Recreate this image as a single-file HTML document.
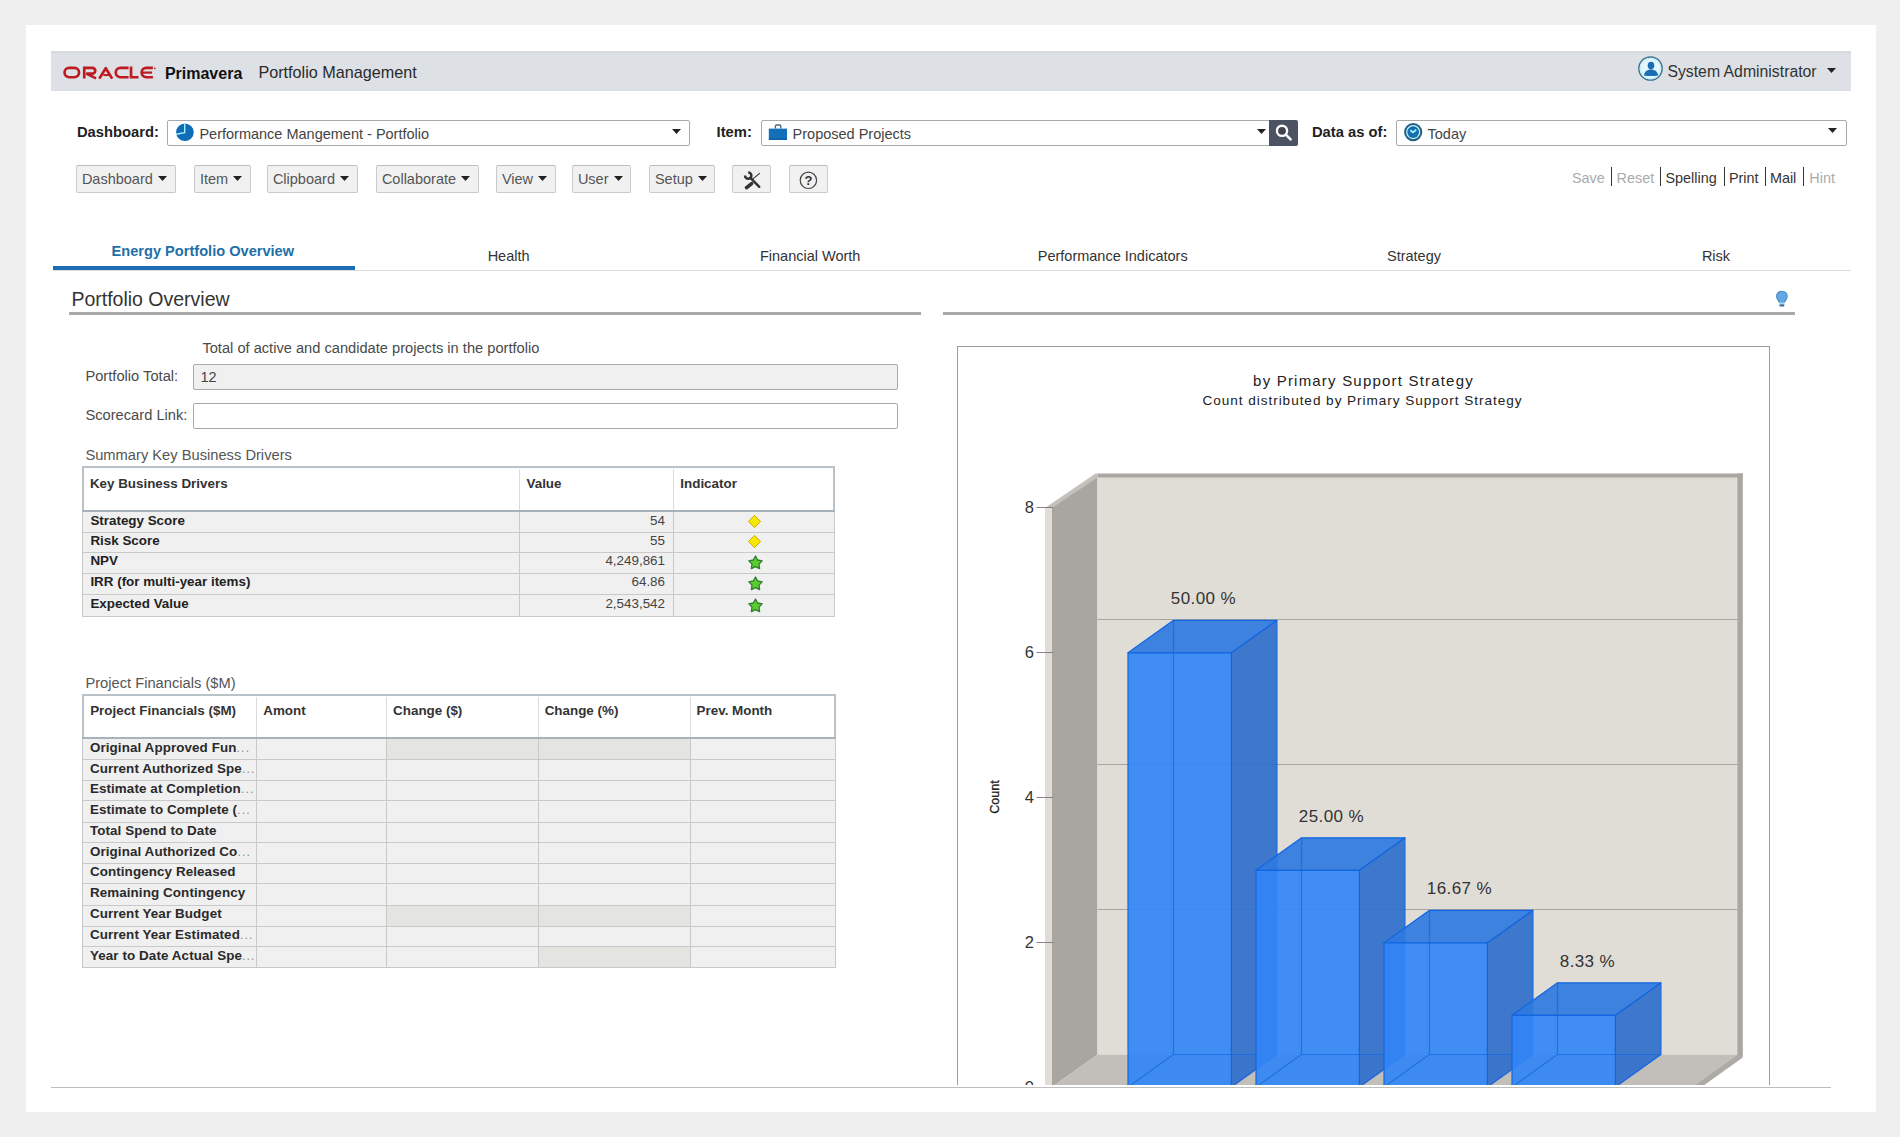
<!DOCTYPE html><html><head><meta charset="utf-8"><style>
html,body{margin:0;padding:0}
body{width:1900px;height:1137px;background:#efefef;position:relative;overflow:hidden;font-family:"Liberation Sans", sans-serif}
.t{position:absolute;line-height:1;white-space:nowrap}
.b{position:absolute;display:block}
</style></head><body>
<div class="b" style="left:26px;top:25px;width:1850px;height:1087px;background:#fff"></div>
<div class="b" style="left:51px;top:51px;width:1800px;height:40px;background:#dde1e5"></div>
<div class="b" style="left:51px;top:51px;width:1800px;height:2px;background:#d6dade"></div>
<div class="b" style="left:51px;top:90px;width:1800px;height:1px;background:#d9dde1"></div>
<svg class="b" style="left:63px;top:66px" width="94" height="14" viewBox="0 0 94 14">
<g fill="none" stroke="#bd1a22" stroke-width="2.7">
<rect x="1.55" y="1.95" width="14.5" height="9.3" rx="4.65"/>
<path d="M21.25 12.6V1.95H29.4A2.85 2.85 0 0 1 29.4 7.65H23.4L33 12.4"/>
<path d="M36.3 12.6L42.75 2.2L49.2 12.6" stroke-linejoin="round"/>
<path d="M40.4 9.05H46.5" stroke-width="2"/>
<path d="M65.6 1.95H57.4A4.65 4.65 0 0 0 57.4 11.25H65.6"/>
<path d="M68.05 0.6V11.25H75.5"/>
<path d="M89.9 1.95H83.3A4.65 4.65 0 0 0 83.3 11.25H89.9"/>
<path d="M79.8 6.6H89.1" stroke-width="2.2"/>
</g><circle cx="91.8" cy="2.3" r="0.9" fill="#bd1a22"/></svg>
<div class="t" style="left:164.9px;top:65.66px;font-size:16px;color:#111;font-weight:bold;">Primavera</div>
<div class="t" style="left:258.4px;top:64.49px;font-size:16.2px;color:#2a2a2a;">Portfolio Management</div>
<svg class="b" style="left:1637px;top:55px" width="28" height="28" viewBox="0 0 28 28">
<circle cx="13.5" cy="13.5" r="11.6" fill="#e4f6fc" stroke="#3d6f8c" stroke-width="1.5"/>
<circle cx="13.5" cy="13.5" r="10.2" fill="none" stroke="#c4eefa" stroke-width="1.2"/>
<ellipse cx="14" cy="10.6" rx="3.3" ry="3.8" fill="#1a6db5"/>
<path d="M7 20.6C7.4 16.6 10 14.4 14 14.4S20.6 16.6 21.2 20.6Q14 21.6 7 20.6Z" fill="#1a6db5"/>
</svg>
<div class="t" style="left:1667.4px;top:63.83px;font-size:15.8px;color:#333;">System Administrator</div>
<svg class="b" style="left:1827px;top:68px" width="9" height="5"><path d="M0 0H9L4.5 5Z" fill="#222"/></svg>
<div class="t" style="left:76.9px;top:124.71px;font-size:14.75px;color:#222;font-weight:bold;">Dashboard:</div>
<div class="b" style="left:167px;top:120px;width:523px;height:26px;background:#fff;border:1px solid #a9a9a9;border-radius:2px;box-sizing:border-box"></div>
<svg class="b" style="left:175px;top:122px" width="20" height="20" viewBox="0 0 20 20">
<circle cx="9.9" cy="10.2" r="8.8" fill="#0f6db8"/>
<path d="M9.7 1.2V10.6L1 12.2" stroke="#a8ecff" stroke-width="1.4" fill="none"/>
</svg>
<div class="t" style="left:199.4px;top:127.23px;font-size:14.5px;color:#444;">Performance Mangement - Portfolio</div>
<svg class="b" style="left:672px;top:129px" width="9" height="5"><path d="M0 0H9L4.5 5Z" fill="#222"/></svg>
<div class="t" style="left:716.6px;top:124.71px;font-size:14.75px;color:#222;font-weight:bold;">Item:</div>
<div class="b" style="left:761px;top:120px;width:509px;height:26px;background:#fff;border:1px solid #a9a9a9;border-radius:2px 0 0 2px;box-sizing:border-box"></div>
<svg class="b" style="left:768px;top:122px" width="20" height="19" viewBox="0 0 20 19">
<rect x="0.8" y="6.6" width="18.2" height="11.3" fill="#1270b8"/>
<rect x="0.8" y="16.6" width="18.2" height="1.3" fill="#0b5e9e"/>
<path d="M7.4 6.6V4.2Q7.4 3 8.6 3H11.6Q12.8 3 12.8 4.2V6.6" fill="none" stroke="#4a6a80" stroke-width="1.4"/>
</svg>
<div class="t" style="left:792.6px;top:127.23px;font-size:14.5px;color:#444;">Proposed Projects</div>
<svg class="b" style="left:1257px;top:129px" width="9" height="5"><path d="M0 0H9L4.5 5Z" fill="#222"/></svg>
<div class="b" style="left:1269px;top:120px;width:29px;height:26px;background:#4b5262;border-radius:0 2px 2px 0"></div>
<svg class="b" style="left:1269px;top:120px" width="29" height="26" viewBox="0 0 29 26">
<circle cx="13" cy="10.8" r="5.1" fill="#3f434b" stroke="#fff" stroke-width="2.4"/>
<path d="M16.8 14.6L21.6 19.4" stroke="#fff" stroke-width="2.6" stroke-linecap="round"/>
</svg>
<div class="t" style="left:1311.9px;top:124.71px;font-size:14.75px;color:#222;font-weight:bold;">Data as of:</div>
<div class="b" style="left:1396px;top:120px;width:451px;height:26px;background:#fff;border:1px solid #a9a9a9;border-radius:2px;box-sizing:border-box"></div>
<svg class="b" style="left:1403px;top:122px" width="20" height="20" viewBox="0 0 20 20">
<circle cx="10.2" cy="10.1" r="8.1" fill="#c8f4fd" stroke="#1f5f82" stroke-width="2"/>
<circle cx="10.2" cy="10.1" r="5.9" fill="#126fb0"/>
<path d="M7.3 8.2L10 10.4L13.2 7.8" fill="none" stroke="#a8f0ff" stroke-width="1.9"/>
</svg>
<div class="t" style="left:1427.5px;top:127.23px;font-size:14.5px;color:#444;">Today</div>
<svg class="b" style="left:1828px;top:128px" width="9" height="5"><path d="M0 0H9L4.5 5Z" fill="#222"/></svg>
<div class="b" style="left:76px;top:165px;width:100px;height:28px;background:#f1f1f1;border:1px solid #c9c9c9;border-top-color:#bdbdbd;border-radius:2px;box-sizing:border-box"></div>
<div class="t" style="left:81.9px;top:171.53px;font-size:14.5px;color:#555;">Dashboard</div>
<svg class="b" style="left:157.8px;top:176px" width="9" height="5"><path d="M0 0H9L4.5 5Z" fill="#222"/></svg>
<div class="b" style="left:194px;top:165px;width:57px;height:28px;background:#f1f1f1;border:1px solid #c9c9c9;border-top-color:#bdbdbd;border-radius:2px;box-sizing:border-box"></div>
<div class="t" style="left:199.9px;top:171.53px;font-size:14.5px;color:#555;">Item</div>
<svg class="b" style="left:233.1px;top:176px" width="9" height="5"><path d="M0 0H9L4.5 5Z" fill="#222"/></svg>
<div class="b" style="left:267px;top:165px;width:91px;height:28px;background:#f1f1f1;border:1px solid #c9c9c9;border-top-color:#bdbdbd;border-radius:2px;box-sizing:border-box"></div>
<div class="t" style="left:272.9px;top:171.53px;font-size:14.5px;color:#555;">Clipboard</div>
<svg class="b" style="left:339.9px;top:176px" width="9" height="5"><path d="M0 0H9L4.5 5Z" fill="#222"/></svg>
<div class="b" style="left:376px;top:165px;width:103px;height:28px;background:#f1f1f1;border:1px solid #c9c9c9;border-top-color:#bdbdbd;border-radius:2px;box-sizing:border-box"></div>
<div class="t" style="left:381.9px;top:171.53px;font-size:14.5px;color:#555;">Collaborate</div>
<svg class="b" style="left:461.0px;top:176px" width="9" height="5"><path d="M0 0H9L4.5 5Z" fill="#222"/></svg>
<div class="b" style="left:496px;top:165px;width:60px;height:28px;background:#f1f1f1;border:1px solid #c9c9c9;border-top-color:#bdbdbd;border-radius:2px;box-sizing:border-box"></div>
<div class="t" style="left:501.9px;top:171.53px;font-size:14.5px;color:#555;">View</div>
<svg class="b" style="left:538.1px;top:176px" width="9" height="5"><path d="M0 0H9L4.5 5Z" fill="#222"/></svg>
<div class="b" style="left:572px;top:165px;width:59px;height:28px;background:#f1f1f1;border:1px solid #c9c9c9;border-top-color:#bdbdbd;border-radius:2px;box-sizing:border-box"></div>
<div class="t" style="left:577.9px;top:171.53px;font-size:14.5px;color:#555;">User</div>
<svg class="b" style="left:613.5px;top:176px" width="9" height="5"><path d="M0 0H9L4.5 5Z" fill="#222"/></svg>
<div class="b" style="left:649px;top:165px;width:66px;height:28px;background:#f1f1f1;border:1px solid #c9c9c9;border-top-color:#bdbdbd;border-radius:2px;box-sizing:border-box"></div>
<div class="t" style="left:654.9px;top:171.53px;font-size:14.5px;color:#555;">Setup</div>
<svg class="b" style="left:697.8px;top:176px" width="9" height="5"><path d="M0 0H9L4.5 5Z" fill="#222"/></svg>
<div class="b" style="left:732px;top:165px;width:39px;height:28px;background:#f1f1f1;border:1px solid #c9c9c9;border-top-color:#bdbdbd;border-radius:2px;box-sizing:border-box"></div>
<svg class="b" style="left:732px;top:165px" width="39" height="28" viewBox="0 0 39 28">
<path d="M16.2 7.4A3.2 3.2 0 1 1 13 10.6" fill="none" stroke="#333" stroke-width="2.5"/>
<path d="M18.4 12.8L27.3 21.8" stroke="#333" stroke-width="2.4" stroke-linecap="round"/>
<path d="M27.8 8.2L20.5 14.4" stroke="#333" stroke-width="1.1"/>
<path d="M19.6 18.6L14.6 22.6" stroke="#333" stroke-width="3.6" stroke-linecap="round"/>
</svg>
<div class="b" style="left:789px;top:165px;width:39px;height:28px;background:#f1f1f1;border:1px solid #c9c9c9;border-top-color:#bdbdbd;border-radius:2px;box-sizing:border-box"></div>
<svg class="b" style="left:798px;top:170px" width="21" height="21" viewBox="0 0 21 21">
<circle cx="10.4" cy="10.3" r="8.2" fill="none" stroke="#444" stroke-width="1.2"/>
<text x="10.4" y="15" text-anchor="middle" font-family="Liberation Sans" font-weight="bold" font-size="13" fill="#333">?</text>
</svg>
<div class="t" style="left:1571.9px;top:170.81px;font-size:14.4px;color:#aaa;">Save</div>
<div class="t" style="left:1616.6px;top:170.81px;font-size:14.4px;color:#aaa;">Reset</div>
<div class="t" style="left:1665.5px;top:170.81px;font-size:14.4px;color:#333;">Spelling</div>
<div class="t" style="left:1728.9px;top:170.81px;font-size:14.4px;color:#333;">Print</div>
<div class="t" style="left:1769.9px;top:170.81px;font-size:14.4px;color:#333;">Mail</div>
<div class="t" style="left:1809.3px;top:170.81px;font-size:14.4px;color:#aaa;">Hint</div>
<div class="b" style="left:1611.1px;top:167px;width:1.400000000000091px;height:19px;background:#333"></div>
<div class="b" style="left:1660.0px;top:167px;width:1.400000000000091px;height:19px;background:#333"></div>
<div class="b" style="left:1723.9px;top:167px;width:1.400000000000091px;height:19px;background:#333"></div>
<div class="b" style="left:1765.1px;top:167px;width:1.400000000000091px;height:19px;background:#333"></div>
<div class="b" style="left:1803.0px;top:167px;width:1.400000000000091px;height:19px;background:#333"></div>
<div class="b" style="left:53px;top:270px;width:1798px;height:1px;background:#dedede"></div>
<div class="b" style="left:53px;top:266px;width:302px;height:4px;background:#1c6db3"></div>
<div class="t" style="left:111.6px;top:244.04px;font-size:14.6px;color:#1f6fa8;font-weight:bold;">Energy Portfolio Overview</div>
<div class="t" style="left:358.6px;width:300px;text-align:center;top:249.13px;font-size:14.5px;color:#333">Health</div>
<div class="t" style="left:660.2px;width:300px;text-align:center;top:249.13px;font-size:14.5px;color:#333">Financial Worth</div>
<div class="t" style="left:962.7px;width:300px;text-align:center;top:249.13px;font-size:14.5px;color:#333">Performance Indicators</div>
<div class="t" style="left:1264px;width:300px;text-align:center;top:249.13px;font-size:14.5px;color:#333">Strategy</div>
<div class="t" style="left:1566px;width:300px;text-align:center;top:249.13px;font-size:14.5px;color:#333">Risk</div>
<div class="t" style="left:71.4px;top:290.29px;font-size:19.5px;color:#333;">Portfolio Overview</div>
<div class="b" style="left:69px;top:312px;width:852px;height:3px;background:#a9a9a9"></div>
<div class="b" style="left:943px;top:312px;width:852px;height:3px;background:#a9a9a9"></div>
<svg class="b" style="left:1774px;top:290px" width="16" height="19" viewBox="0 0 16 19">
<path d="M7.9 1.2C4.6 1.2 2.6 3.6 2.6 6.4C2.6 8.9 4.6 10.2 5.3 12.2H10.5C11.2 10.2 13.2 8.9 13.2 6.4C13.2 3.6 11.2 1.2 7.9 1.2Z" fill="#64a8e6" stroke="#4a8cc6" stroke-width="1.1"/>
<rect x="5.3" y="12.4" width="5.2" height="1.6" fill="#a8d6f2"/>
<rect x="5.4" y="14.2" width="5" height="2.2" rx="0.6" fill="#3f6f9a"/>
</svg>
<div class="t" style="left:202.4px;top:341.20px;font-size:14.65px;color:#4a4a4a;">Total of active and candidate projects in the portfolio</div>
<div class="t" style="left:85.4px;top:369.36px;font-size:14.7px;color:#4a4a4a;">Portfolio Total:</div>
<div class="b" style="left:193px;top:364px;width:705px;height:26px;background:#f0f0f0;border:1px solid #a9a9a9;border-radius:2px;box-sizing:border-box"></div>
<div class="t" style="left:200.4px;top:369.53px;font-size:14.5px;color:#444;">12</div>
<div class="t" style="left:85.4px;top:408.46px;font-size:14.7px;color:#4a4a4a;">Scorecard Link:</div>
<div class="b" style="left:193px;top:403px;width:705px;height:26px;background:#fff;border:1px solid #a9a9a9;border-radius:2px;box-sizing:border-box"></div>
<div class="t" style="left:85.4px;top:448.06px;font-size:14.7px;color:#555;">Summary Key Business Drivers</div>
<div class="b" style="left:82px;top:466px;width:753px;height:45px;background:#fff;border:2px solid #b9c1c9;border-bottom:none;box-sizing:border-box"></div>
<div class="b" style="left:82px;top:510px;width:753px;height:2px;background:#a9b2bb"></div>
<div class="b" style="left:82px;top:512px;width:753px;height:105px;background:#f0f0f0;border:1px solid #c8c8c8;border-top:none;box-sizing:border-box"></div>
<div class="b" style="left:82px;top:532px;width:753px;height:1px;background:#c9c9c9"></div>
<div class="b" style="left:82px;top:552px;width:753px;height:1px;background:#c9c9c9"></div>
<div class="b" style="left:82px;top:573px;width:753px;height:1px;background:#c9c9c9"></div>
<div class="b" style="left:82px;top:594px;width:753px;height:1px;background:#c9c9c9"></div>
<div class="b" style="left:519px;top:469px;width:1px;height:41px;background:#dcdcdc"></div>
<div class="b" style="left:519px;top:512px;width:1px;height:105px;background:#c9c9c9"></div>
<div class="b" style="left:673px;top:469px;width:1px;height:41px;background:#dcdcdc"></div>
<div class="b" style="left:673px;top:512px;width:1px;height:105px;background:#c9c9c9"></div>
<div class="t" style="left:89.9px;top:476.66px;font-size:13.4px;color:#333;font-weight:bold;">Key Business Drivers</div>
<div class="t" style="left:526.5px;top:476.66px;font-size:13.4px;color:#333;font-weight:bold;">Value</div>
<div class="t" style="left:680.3px;top:476.66px;font-size:13.4px;color:#333;font-weight:bold;">Indicator</div>
<div class="t" style="left:90.4px;top:513.96px;font-size:13.4px;color:#222;font-weight:bold;">Strategy Score</div>
<div class="t" style="left:520px;width:145px;text-align:right;top:513.96px;font-size:13.4px;color:#444">54</div>
<svg class="b" style="left:746px;top:512.6px" width="17" height="17" viewBox="0 0 17 17"><path d="M8.5 2.4L14.6 8.5L8.5 14.6L2.4 8.5Z" fill="#f8e800" stroke="#d0a800" stroke-width="1"/></svg>
<div class="t" style="left:90.4px;top:533.96px;font-size:13.4px;color:#222;font-weight:bold;">Risk Score</div>
<div class="t" style="left:520px;width:145px;text-align:right;top:533.96px;font-size:13.4px;color:#444">55</div>
<svg class="b" style="left:746px;top:532.6px" width="17" height="17" viewBox="0 0 17 17"><path d="M8.5 2.4L14.6 8.5L8.5 14.6L2.4 8.5Z" fill="#f8e800" stroke="#d0a800" stroke-width="1"/></svg>
<div class="t" style="left:90.4px;top:554.46px;font-size:13.4px;color:#222;font-weight:bold;">NPV</div>
<div class="t" style="left:520px;width:145px;text-align:right;top:554.46px;font-size:13.4px;color:#444">4,249,861</div>
<svg class="b" style="left:746.5px;top:553.9px" width="17" height="17" viewBox="0 0 17 17"><path d="M8.50 2.00L10.67 6.01L15.16 6.84L12.02 10.14L12.61 14.66L8.50 12.70L4.39 14.66L4.98 10.14L1.84 6.84L6.33 6.01Z" fill="#5acd2e" stroke="#2e7d32" stroke-width="1.3" stroke-linejoin="round"/></svg>
<div class="t" style="left:90.4px;top:575.46px;font-size:13.4px;color:#222;font-weight:bold;">IRR (for multi-year items)</div>
<div class="t" style="left:520px;width:145px;text-align:right;top:575.46px;font-size:13.4px;color:#444">64.86</div>
<svg class="b" style="left:746.5px;top:574.9px" width="17" height="17" viewBox="0 0 17 17"><path d="M8.50 2.00L10.67 6.01L15.16 6.84L12.02 10.14L12.61 14.66L8.50 12.70L4.39 14.66L4.98 10.14L1.84 6.84L6.33 6.01Z" fill="#5acd2e" stroke="#2e7d32" stroke-width="1.3" stroke-linejoin="round"/></svg>
<div class="t" style="left:90.4px;top:597.21px;font-size:13.4px;color:#222;font-weight:bold;">Expected Value</div>
<div class="t" style="left:520px;width:145px;text-align:right;top:597.21px;font-size:13.4px;color:#444">2,543,542</div>
<svg class="b" style="left:746.5px;top:596.6px" width="17" height="17" viewBox="0 0 17 17"><path d="M8.50 2.00L10.67 6.01L15.16 6.84L12.02 10.14L12.61 14.66L8.50 12.70L4.39 14.66L4.98 10.14L1.84 6.84L6.33 6.01Z" fill="#5acd2e" stroke="#2e7d32" stroke-width="1.3" stroke-linejoin="round"/></svg>
<div class="t" style="left:85.4px;top:676.26px;font-size:14.7px;color:#555;">Project Financials ($M)</div>
<div class="b" style="left:82px;top:694px;width:754px;height:44px;background:#fff;border:2px solid #b9c1c9;border-bottom:none;box-sizing:border-box"></div>
<div class="b" style="left:82px;top:737px;width:754px;height:2px;background:#a9b2bb"></div>
<div class="b" style="left:82px;top:739px;width:754px;height:229px;background:#f0f0f0;border:1px solid #c8c8c8;border-top:none;box-sizing:border-box"></div>
<div class="b" style="left:387px;top:739px;width:150.5px;height:20px;background:#e4e4e0"></div>
<div class="b" style="left:538.5px;top:905.5px;width:151.0px;height:20.0px;background:#e4e4e0"></div>
<div class="b" style="left:538.5px;top:947px;width:151.0px;height:20.200000000000045px;background:#e4e4e0"></div>
<div class="b" style="left:387px;top:905.5px;width:150.5px;height:20.0px;background:#e4e4e0"></div>
<div class="b" style="left:538.5px;top:739px;width:151.0px;height:20px;background:#e4e4e0"></div>
<div class="b" style="left:82px;top:759px;width:754px;height:1px;background:#c9c9c9"></div>
<div class="b" style="left:82px;top:779.5px;width:754px;height:1.0px;background:#c9c9c9"></div>
<div class="b" style="left:82px;top:800px;width:754px;height:1px;background:#c9c9c9"></div>
<div class="b" style="left:82px;top:821.5px;width:754px;height:1.0px;background:#c9c9c9"></div>
<div class="b" style="left:82px;top:842px;width:754px;height:1px;background:#c9c9c9"></div>
<div class="b" style="left:82px;top:863px;width:754px;height:1px;background:#c9c9c9"></div>
<div class="b" style="left:82px;top:883px;width:754px;height:1px;background:#c9c9c9"></div>
<div class="b" style="left:82px;top:904.5px;width:754px;height:1.0px;background:#c9c9c9"></div>
<div class="b" style="left:82px;top:925.5px;width:754px;height:1.0px;background:#c9c9c9"></div>
<div class="b" style="left:82px;top:946px;width:754px;height:1px;background:#c9c9c9"></div>
<div class="b" style="left:256px;top:697px;width:1px;height:40px;background:#dcdcdc"></div>
<div class="b" style="left:256px;top:739px;width:1px;height:229px;background:#c9c9c9"></div>
<div class="b" style="left:386px;top:697px;width:1px;height:40px;background:#dcdcdc"></div>
<div class="b" style="left:386px;top:739px;width:1px;height:229px;background:#c9c9c9"></div>
<div class="b" style="left:537.5px;top:697px;width:1.0px;height:40px;background:#dcdcdc"></div>
<div class="b" style="left:537.5px;top:739px;width:1.0px;height:229px;background:#c9c9c9"></div>
<div class="b" style="left:689.5px;top:697px;width:1.0px;height:40px;background:#dcdcdc"></div>
<div class="b" style="left:689.5px;top:739px;width:1.0px;height:229px;background:#c9c9c9"></div>
<div class="t" style="left:90.2px;top:704.46px;font-size:13.4px;color:#333;font-weight:bold;">Project Financials ($M)</div>
<div class="t" style="left:263.3px;top:704.46px;font-size:13.4px;color:#333;font-weight:bold;">Amont</div>
<div class="t" style="left:393.1px;top:704.46px;font-size:13.4px;color:#333;font-weight:bold;">Change ($)</div>
<div class="t" style="left:544.7px;top:704.46px;font-size:13.4px;color:#333;font-weight:bold;">Change (%)</div>
<div class="t" style="left:696.6px;top:704.46px;font-size:13.4px;color:#333;font-weight:bold;">Prev. Month</div>
<div class="t" style="left:89.9px;top:741.26px;font-size:13.4px;color:#2a2a2a;font-weight:bold;letter-spacing:0.1px">Original Approved Fun<span style="color:#888;font-weight:normal;letter-spacing:1.2px;font-size:12px">...</span></div>
<div class="t" style="left:89.9px;top:761.51px;font-size:13.4px;color:#2a2a2a;font-weight:bold;letter-spacing:0.1px">Current Authorized Spe<span style="color:#888;font-weight:normal;letter-spacing:1.2px;font-size:12px">...</span></div>
<div class="t" style="left:89.9px;top:782.01px;font-size:13.4px;color:#2a2a2a;font-weight:bold;letter-spacing:0.1px">Estimate at Completion<span style="color:#888;font-weight:normal;letter-spacing:1.2px;font-size:12px">...</span></div>
<div class="t" style="left:89.9px;top:803.01px;font-size:13.4px;color:#2a2a2a;font-weight:bold;letter-spacing:0.1px">Estimate to Complete (<span style="color:#888;font-weight:normal;letter-spacing:1.2px;font-size:12px">...</span></div>
<div class="t" style="left:89.9px;top:824.01px;font-size:13.4px;color:#2a2a2a;font-weight:bold;letter-spacing:0.1px">Total Spend to Date</div>
<div class="t" style="left:89.9px;top:844.76px;font-size:13.4px;color:#2a2a2a;font-weight:bold;letter-spacing:0.1px">Original Authorized Co<span style="color:#888;font-weight:normal;letter-spacing:1.2px;font-size:12px">...</span></div>
<div class="t" style="left:89.9px;top:865.26px;font-size:13.4px;color:#2a2a2a;font-weight:bold;letter-spacing:0.1px">Contingency Released</div>
<div class="t" style="left:89.9px;top:886.01px;font-size:13.4px;color:#2a2a2a;font-weight:bold;letter-spacing:0.1px">Remaining Contingency</div>
<div class="t" style="left:89.9px;top:907.26px;font-size:13.4px;color:#2a2a2a;font-weight:bold;letter-spacing:0.1px">Current Year Budget</div>
<div class="t" style="left:89.9px;top:928.01px;font-size:13.4px;color:#2a2a2a;font-weight:bold;letter-spacing:0.1px">Current Year Estimated<span style="color:#888;font-weight:normal;letter-spacing:1.2px;font-size:12px">...</span></div>
<div class="t" style="left:89.9px;top:948.86px;font-size:13.4px;color:#2a2a2a;font-weight:bold;letter-spacing:0.1px">Year to Date Actual Spe<span style="color:#888;font-weight:normal;letter-spacing:1.2px;font-size:12px">...</span></div>
<div class="b" style="left:51px;top:1087px;width:1780px;height:1px;background:#bdbdbd"></div>
<svg class="b" style="left:957px;top:345px" width="813" height="740" viewBox="957 345 813 740"><rect x="957.5" y="346.5" width="812" height="760" fill="#fff" stroke="#9d9d9d" stroke-width="1"/><path d="M1045 508.0 L1052 507.0 L1052 1090 L1045 1090Z" fill="#e0ddd7"/><path d="M1052 507.0 L1097.5 474.5 L1097.5 1054.5 L1052 1087Z" fill="#a9a6a1"/><path d="M1045 508.0 L1095.5 473.5 L1097.5 473.5 L1097.5 477.5 L1052 508.0Z" fill="#c4c1bc"/><rect x="1097.5" y="474.5" width="639.8" height="580.0" fill="#e0ddd7"/><rect x="1097.5" y="473.5" width="645.3" height="4" fill="#aaa7a2"/><rect x="1737.3" y="473.5" width="5.5" height="583.5" fill="#aaa7a2"/><path d="M1052 1087 L1097.5 1054.5 L1737.3 1054.5 L1691.8 1087Z" fill="#c2bfba"/><path d="M1737.3 1054.5 L1742.8 1057.5 L1697.3 1090 L1691.8 1087Z" fill="#aeaba6"/><line x1="1097.5" y1="909.5" x2="1737.3" y2="909.5" stroke="#a8a5a0" stroke-width="1"/><line x1="1097.5" y1="764.5" x2="1737.3" y2="764.5" stroke="#a8a5a0" stroke-width="1"/><line x1="1097.5" y1="619.5" x2="1737.3" y2="619.5" stroke="#a8a5a0" stroke-width="1"/><line x1="1036.5" y1="1087.5" x2="1053" y2="1087.5" stroke="#777" stroke-width="0.9"/><text x="1034" y="1093.0" text-anchor="end" font-family="Liberation Sans" font-size="16.5" fill="#333">0</text><line x1="1036.5" y1="942.5" x2="1053" y2="942.5" stroke="#777" stroke-width="0.9"/><text x="1034" y="948.0" text-anchor="end" font-family="Liberation Sans" font-size="16.5" fill="#333">2</text><line x1="1036.5" y1="797.5" x2="1053" y2="797.5" stroke="#777" stroke-width="0.9"/><text x="1034" y="803.0" text-anchor="end" font-family="Liberation Sans" font-size="16.5" fill="#333">4</text><line x1="1036.5" y1="652.5" x2="1053" y2="652.5" stroke="#777" stroke-width="0.9"/><text x="1034" y="658.0" text-anchor="end" font-family="Liberation Sans" font-size="16.5" fill="#333">6</text><line x1="1036.5" y1="507.5" x2="1053" y2="507.5" stroke="#777" stroke-width="0.9"/><text x="1034" y="513.0" text-anchor="end" font-family="Liberation Sans" font-size="16.5" fill="#333">8</text><text transform="translate(999 797) rotate(-90)" text-anchor="middle" font-family="Liberation Sans" font-size="12.6" fill="#222" stroke="#222" stroke-width="0.3">Count</text><text x="1363.5" y="385.6" text-anchor="middle" font-family="Liberation Sans" font-size="15" letter-spacing="1.2" fill="#222">by Primary Support Strategy</text><text x="1362.5" y="404.6" text-anchor="middle" font-family="Liberation Sans" font-size="13.6" letter-spacing="0.95" fill="#222">Count distributed by Primary Support Strategy</text><g stroke="#1466e0" stroke-width="1.2" stroke-linejoin="round"><path d="M1231.4 652.8 L1276.9 620.3 L1276.9 1054.5 L1231.4 1087Z" fill="#2f6fcc" fill-opacity="0.92"/><path d="M1128 652.8 L1173.5 620.3 L1276.9 620.3 L1231.4 652.8Z" fill="#2f79e0" fill-opacity="0.92"/><path d="M1128 652.8 L1231.4 652.8 L1231.4 1087 L1128 1087Z" fill="#3286f5" fill-opacity="0.92"/><path d="M1173.5 620.3 V1054.5 H1276.9 M1128 1087 L1173.5 1054.5" fill="none" stroke-opacity="0.7"/></g><text x="1203.45" y="604.0" text-anchor="middle" font-family="Liberation Sans" font-size="17" letter-spacing="0.4" fill="#333">50.00 %</text><g stroke="#1466e0" stroke-width="1.2" stroke-linejoin="round"><path d="M1359.4 870.3 L1404.9 837.8 L1404.9 1054.5 L1359.4 1087Z" fill="#2f6fcc" fill-opacity="0.92"/><path d="M1256 870.3 L1301.5 837.8 L1404.9 837.8 L1359.4 870.3Z" fill="#2f79e0" fill-opacity="0.92"/><path d="M1256 870.3 L1359.4 870.3 L1359.4 1087 L1256 1087Z" fill="#3286f5" fill-opacity="0.92"/><path d="M1301.5 837.8 V1054.5 H1404.9 M1256 1087 L1301.5 1054.5" fill="none" stroke-opacity="0.7"/></g><text x="1331.45" y="821.5" text-anchor="middle" font-family="Liberation Sans" font-size="17" letter-spacing="0.4" fill="#333">25.00 %</text><g stroke="#1466e0" stroke-width="1.2" stroke-linejoin="round"><path d="M1487.4 942.8 L1532.9 910.3 L1532.9 1054.5 L1487.4 1087Z" fill="#2f6fcc" fill-opacity="0.92"/><path d="M1384 942.8 L1429.5 910.3 L1532.9 910.3 L1487.4 942.8Z" fill="#2f79e0" fill-opacity="0.92"/><path d="M1384 942.8 L1487.4 942.8 L1487.4 1087 L1384 1087Z" fill="#3286f5" fill-opacity="0.92"/><path d="M1429.5 910.3 V1054.5 H1532.9 M1384 1087 L1429.5 1054.5" fill="none" stroke-opacity="0.7"/></g><text x="1459.45" y="894.0" text-anchor="middle" font-family="Liberation Sans" font-size="17" letter-spacing="0.4" fill="#333">16.67 %</text><g stroke="#1466e0" stroke-width="1.2" stroke-linejoin="round"><path d="M1615.4 1015.3 L1660.9 982.8 L1660.9 1054.5 L1615.4 1087Z" fill="#2f6fcc" fill-opacity="0.92"/><path d="M1512 1015.3 L1557.5 982.8 L1660.9 982.8 L1615.4 1015.3Z" fill="#2f79e0" fill-opacity="0.92"/><path d="M1512 1015.3 L1615.4 1015.3 L1615.4 1087 L1512 1087Z" fill="#3286f5" fill-opacity="0.92"/><path d="M1557.5 982.8 V1054.5 H1660.9 M1512 1087 L1557.5 1054.5" fill="none" stroke-opacity="0.7"/></g><text x="1587.45" y="966.5" text-anchor="middle" font-family="Liberation Sans" font-size="17" letter-spacing="0.4" fill="#333">8.33 %</text></svg>
</body></html>
